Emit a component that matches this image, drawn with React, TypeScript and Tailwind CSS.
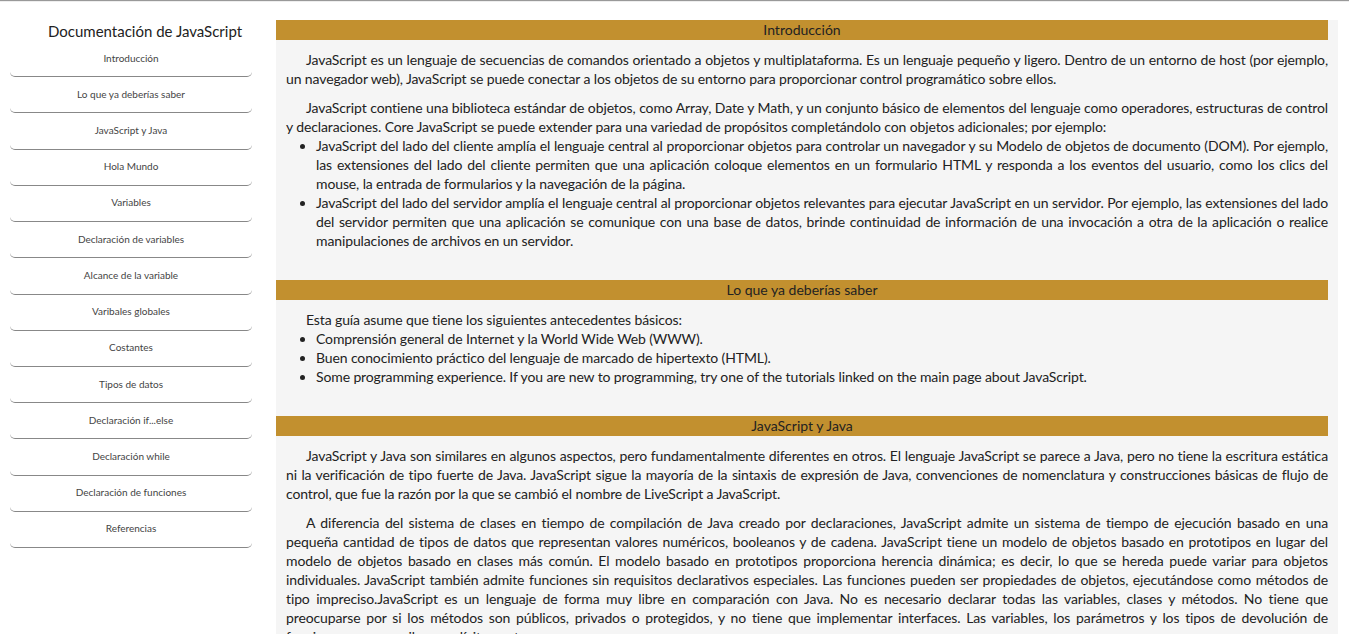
import React from "react";

const navItems = [
  "Introducción",
  "Lo que ya deberías saber",
  "JavaScript y Java",
  "Hola Mundo",
  "Variables",
  "Declaración de variables",
  "Alcance de la variable",
  "Varibales globales",
  "Costantes",
  "Tipos de datos",
  "Declaración if...else",
  "Declaración while",
  "Declaración de funciones",
  "Referencias",
];

function SectionHeader({ title }: { title: string }) {
  return (
    <header className="h-[20px] bg-[#c2902f] text-center text-[14px] leading-[20px] tracking-normal text-[#222]">
      {title}
    </header>
  );
}

function Para({ children }: { children: React.ReactNode }) {
  return (
    <p className="mt-[10px] pl-[10px] indent-[20px] text-justify">{children}</p>
  );
}

function List({ items }: { items: string[] }) {
  return (
    <ul className="list-disc pl-[40px] text-justify">
      {items.map((item) => (
        <li key={item}>{item}</li>
      ))}
    </ul>
  );
}

export default function App() {
  return (
    <div
      className="min-h-screen bg-white text-[#222]"
      style={{ fontFamily: "Lato, 'Open Sans', sans-serif" }}
    >
      <div className="border-t border-b border-t-[#999] border-b-[#eee]" />
      <div className="flex items-start">
        <nav className="mt-[18px] ml-[10px] w-[242px] shrink-0">
          <h1 className="whitespace-nowrap pl-[38px] text-[15px] leading-[22px] text-[#222]">
            Documentación de JavaScript
          </h1>
          <ul className="mt-[-1px]">
            {navItems.map((item) => (
              <li
                key={item}
                className="flex h-[36.23px] items-center justify-center whitespace-nowrap rounded-[5px] border-b border-[#888] pb-[1px] text-[10px] text-[#444]"
              >
                {item}
              </li>
            ))}
          </ul>
        </nav>
        <main className="mt-[18px] ml-[24px] w-[1062px] bg-[#f5f5f5] pr-[10px] text-[14px] leading-[19px] tracking-[-0.12px]">
          <section className="pb-[30px]">
            <SectionHeader title="Introducción" />
            <Para>
              JavaScript es un lenguaje de secuencias de comandos orientado a
              objetos y multiplataforma. Es un lenguaje pequeño y ligero. Dentro
              de un entorno de host (por ejemplo, un navegador web), JavaScript
              se puede conectar a los objetos de su entorno para proporcionar
              control programático sobre ellos.
            </Para>
            <Para>
              JavaScript contiene una biblioteca estándar de objetos, como
              Array, Date y Math, y un conjunto básico de elementos del lenguaje
              como operadores, estructuras de control y declaraciones. Core
              JavaScript se puede extender para una variedad de propósitos
              completándolo con objetos adicionales; por ejemplo:
            </Para>
            <List
              items={[
                "JavaScript del lado del cliente amplía el lenguaje central al proporcionar objetos para controlar un navegador y su Modelo de objetos de documento (DOM). Por ejemplo, las extensiones del lado del cliente permiten que una aplicación coloque elementos en un formulario HTML y responda a los eventos del usuario, como los clics del mouse, la entrada de formularios y la navegación de la página.",
                "JavaScript del lado del servidor amplía el lenguaje central al proporcionar objetos relevantes para ejecutar JavaScript en un servidor. Por ejemplo, las extensiones del lado del servidor permiten que una aplicación se comunique con una base de datos, brinde continuidad de información de una invocación a otra de la aplicación o realice manipulaciones de archivos en un servidor.",
              ]}
            />
          </section>
          <section className="pb-[30px]">
            <SectionHeader title="Lo que ya deberías saber" />
            <Para>Esta guía asume que tiene los siguientes antecedentes básicos:</Para>
            <List
              items={[
                "Comprensión general de Internet y la World Wide Web (WWW).",
                "Buen conocimiento práctico del lenguaje de marcado de hipertexto (HTML).",
                "Some programming experience. If you are new to programming, try one of the tutorials linked on the main page about JavaScript.",
              ]}
            />
          </section>
          <section className="pb-[30px]">
            <SectionHeader title="JavaScript y Java" />
            <Para>
              JavaScript y Java son similares en algunos aspectos, pero
              fundamentalmente diferentes en otros. El lenguaje JavaScript se
              parece a Java, pero no tiene la escritura estática ni la
              verificación de tipo fuerte de Java. JavaScript sigue la mayoría
              de la sintaxis de expresión de Java, convenciones de nomenclatura
              y construcciones básicas de flujo de control, que fue la razón por
              la que se cambió el nombre de LiveScript a JavaScript.
            </Para>
            <Para>
              A diferencia del sistema de clases en tiempo de compilación de
              Java creado por declaraciones, JavaScript admite un sistema de
              tiempo de ejecución basado en una pequeña cantidad de tipos de
              datos que representan valores numéricos, booleanos y de cadena.
              JavaScript tiene un modelo de objetos basado en prototipos en
              lugar del modelo de objetos basado en clases más común. El modelo
              basado en prototipos proporciona herencia dinámica; es decir, lo
              que se hereda puede variar para objetos individuales. JavaScript
              también admite funciones sin requisitos declarativos especiales.
              Las funciones pueden ser propiedades de objetos, ejecutándose como
              métodos de tipo impreciso.JavaScript es un lenguaje de forma muy
              libre en comparación con Java. No es necesario declarar todas las
              variables, clases y métodos. No tiene que preocuparse por si los
              métodos son públicos, privados o protegidos, y no tiene que
              implementar interfaces. Las variables, los parámetros y los tipos
              de devolución de funciones no se escriben explícitamente.
            </Para>
          </section>
        </main>
      </div>
    </div>
  );
}
